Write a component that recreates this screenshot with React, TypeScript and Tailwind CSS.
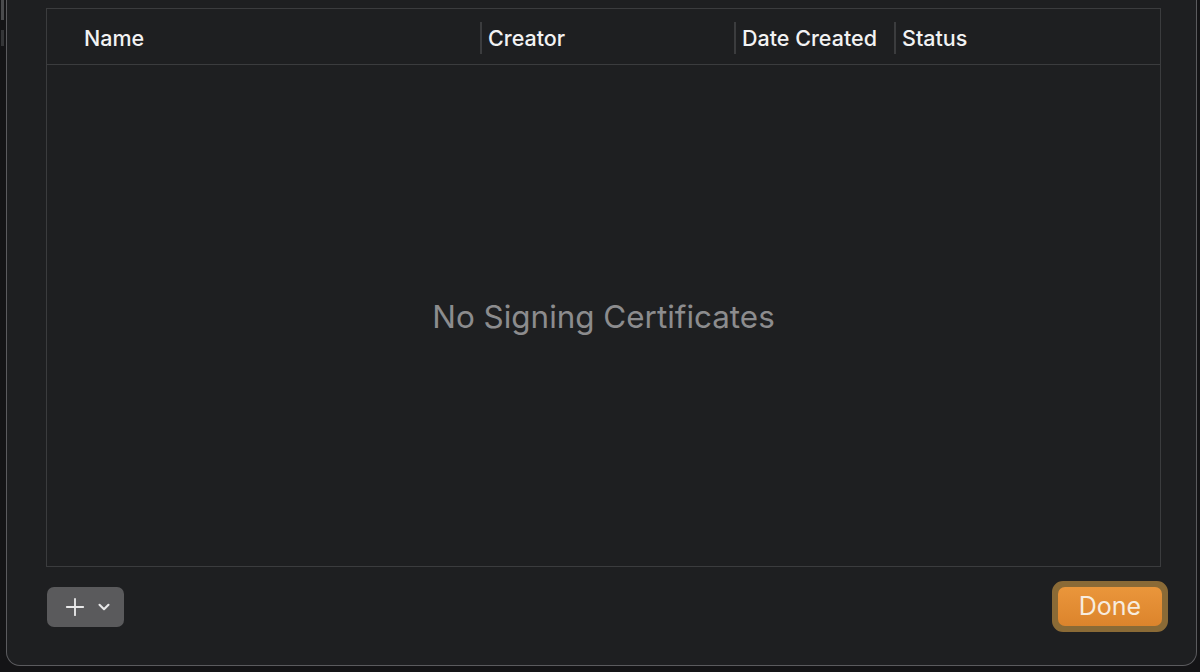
import { ChevronDown, Plus } from 'lucide-react';

const columns = [
  { label: 'Name', width: 'w-[433px]', divider: false },
  { label: 'Creator', width: 'w-[254px]', divider: true },
  { label: 'Date Created', width: 'w-[160px]', divider: true },
  { label: 'Status', width: 'flex-1', divider: true },
] as const;

export default function App() {
  return (
    <div className="h-[672px] w-[1200px] overflow-hidden bg-[#141416] font-['Inter',sans-serif]">
      <div className="relative ml-[6px] h-[666px] w-[1191px] rounded-b-[14px] border-x border-b border-[#5b5b5e] bg-[#1e1f21]">
        {/* top-left scrap of the window behind */}
        <div className="absolute -left-[6px] top-0 h-[20px] w-[3px] bg-[#4a4b4d]" />
        <div className="absolute -left-[6px] top-[30px] h-[16px] w-[3px] bg-[#353638]" />

        <div className="flex h-full flex-col pl-[39px] pr-[28px] pt-[8px]">
          <div className="mr-[7px] flex h-[559px] flex-col border-[1.5px] border-[#3b3c3e] bg-[#1e1f21]">
            <div className="flex h-[56px] shrink-0 items-center border-b-[1.5px] border-[#3b3c3e]">
              {columns.map((col) => (
                <div key={col.label} className={`flex h-full items-center pt-[3px] ${col.width}`}>
                  {col.divider ? (
                    <span className="mr-[6px] -mt-[1px] h-[32px] w-[2px] bg-[#3b3c3e]" />
                  ) : (
                    <span className="w-[37px]" />
                  )}
                  <span className="text-[21.5px] font-medium text-[#f2f2f3]">{col.label}</span>
                </div>
              ))}
            </div>
            <div className="flex flex-1 items-center justify-center pt-[4px]">
              <span className="text-[31.4px] text-[#8c8c8e]">No Signing Certificates</span>
            </div>
          </div>

          <div className="mt-[20px] flex items-start justify-between">
            <button
              type="button"
              className="ml-[1px] flex h-[40px] w-[77px] items-center justify-center gap-[6px] rounded-[7px] bg-[#5a5a5c] pl-[2px] text-[#e8e8e9]"
            >
              <Plus size={28} strokeWidth={1.6} />
              <ChevronDown size={18} strokeWidth={2.8} />
            </button>
            <div className="-mt-[6px] rounded-[11px] border-[6px] border-[#8a6a36] bg-[#8a6a36]">
              <button
                type="button"
                className="flex h-[39px] w-[104px] items-center justify-center rounded-[7px] bg-gradient-to-b from-[#ea963b] to-[#dc842c] text-[25px] text-[#f7ecdf]"
              >
                Done
              </button>
            </div>
          </div>
        </div>
      </div>
    </div>
  );
}
